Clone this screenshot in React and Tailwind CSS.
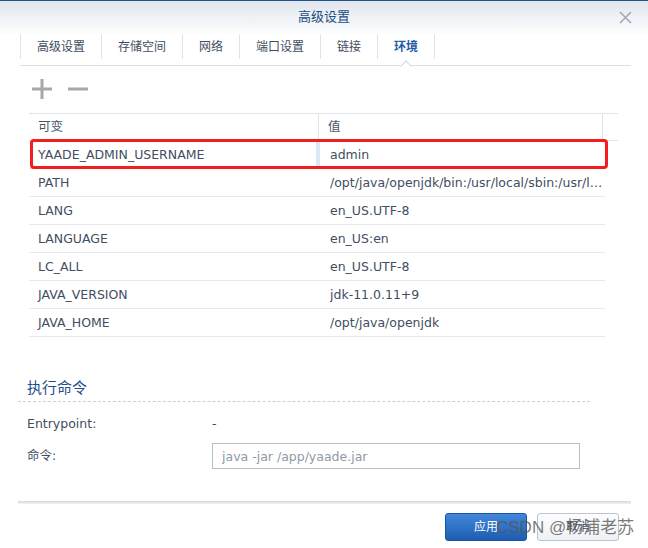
import React from "react";

const TABS = ["高级设置", "存储空间", "网络", "端口设置", "链接", "环境"];

const ROWS = [
  ["YAADE_ADMIN_USERNAME", "admin"],
  ["PATH", "/opt/java/openjdk/bin:/usr/local/sbin:/usr/local/bin:/usr/sbin:/usr/bin:/sbin:/bin"],
  ["LANG", "en_US.UTF-8"],
  ["LANGUAGE", "en_US:en"],
  ["LC_ALL", "en_US.UTF-8"],
  ["JAVA_VERSION", "jdk-11.0.11+9"],
  ["JAVA_HOME", "/opt/java/openjdk"],
];

const Tabs = ({ active = 5 }) => {
  return (
    <div className="ml-[20px] mr-[17px] h-[33px] border-b border-[#d9dee4] flex items-start text-[12px]">
      {TABS.map((t, i) => (
        <div
          key={t}
          className={`relative mt-[1px] h-[25px] px-[16px] flex items-center border-l border-[#dfe4ea] ${i === TABS.length - 1 ? "border-r" : ""} ${i === active ? "text-[#1f5ba6] font-bold" : "text-[#3e4d5e]"}`}
        >
          {t}
          {i === active && (
            <span className="absolute left-1/2 -ml-[4px] top-[28px] w-[8px] h-[8px] rotate-45 bg-white border-l border-t border-[#d3d9e0]" />
          )}
        </div>
      ))}
    </div>
  );
};

const Toolbar = () => {
  return (
    <div className="mt-[13px] pl-[32px] flex gap-[16px]">
      <svg width="20" height="20" viewBox="0 0 20 20">
        <rect x="0" y="8.5" width="20" height="3" fill="#a8a8a8" />
        <rect x="8.5" y="0" width="3" height="20" fill="#a8a8a8" />
      </svg>
      <svg width="20" height="20" viewBox="0 0 20 20">
        <rect x="0" y="8.5" width="20" height="3" fill="#a8a8a8" />
      </svg>
    </div>
  );
};

const EnvTable = () => {
  return (
    <div className="relative mt-[14px] ml-[29px] w-[589px]">
      <div className="h-[28px] flex border-t border-b border-[#dfe4ea] text-[#47576a]">
        <div className="w-[290px] pl-[9px] pt-[1px] flex items-center border-r border-[#dfe4ea]">可变</div>
        <div className="w-[284px] pl-[9px] pt-[1px] flex items-center border-r border-[#dfe4ea]">值</div>
        <div className="flex-1" />
      </div>
      {ROWS.map(([k, v], i) => (
        <div key={k} className="w-[576px] h-[28px] flex border-b border-[#e5e9ee]">
          <div className={`${i === 0 ? "w-[287px]" : "w-[291px]"} pl-[9px] pt-[2px] flex items-center`}>{k}</div>
          {i === 0 && <div className="w-[4px] bg-[#dce7f5]" />}
          <div className="w-[284px] pl-[10px] pt-[2px] flex items-center min-w-0">
            <span className="truncate">{v}</span>
          </div>
        </div>
      ))}
      <div className="absolute left-[1px] top-[26px] w-[578px] h-[30px] border-[3px] border-[#f41d1d] rounded-[4px] pointer-events-none" />
    </div>
  );
};

export default function App() {
  return (
    <div className="relative w-[648px] h-[548px] overflow-hidden bg-white border-t border-[#23528f] text-[12.5px] text-[#3f4e61] font-['DejaVu_Sans','Noto_Sans_CJK_SC',sans-serif]">
      <div className="relative h-[32px] flex items-center justify-center bg-gradient-to-b from-[#e1e7ee] to-[#fbfcfd]">
        <span className="text-[13px] text-[#1b4c87]">高级设置</span>
        <svg className="absolute right-[16px] top-[10px]" width="13" height="13" viewBox="0 0 13 13">
          <path d="M1 1 L12 12 M12 1 L1 12" stroke="#a2a9b1" strokeWidth="1.6" />
        </svg>
      </div>

      <Tabs />
      <Toolbar />
      <EnvTable />

      <div className="mt-[41px] ml-[18px] mr-[58px]">
        <div className="pl-[9px] pb-[3px] h-[24px] leading-[20px] text-[15px] text-[#1f4f8b] border-b border-dashed border-[#c8d0da]">
          执行命令
        </div>
        <div className="mt-[12px] h-[20px] flex items-center pl-[9px]">
          <div className="w-[185px]">Entrypoint:</div>
          <div>-</div>
        </div>
        <div className="mt-[9px] flex items-center pl-[9px]">
          <div className="w-[185px]">命令:</div>
          <input
            className="w-[368px] h-[26px] px-[9px] border border-[#b5c0cd] outline-none bg-white text-[12.5px] placeholder:text-[#8e9aa8]"
            placeholder="java -jar /app/yaade.jar"
          />
        </div>
      </div>

      <div className="mt-[32px] ml-[18px] mr-[17px] h-[3px] bg-gradient-to-b from-[#d8d8d8] to-[#f4f4f4]" />

      <div className="mt-[9px] mr-[29px] flex justify-end gap-[10px]">
        <button className="w-[82px] h-[28px] rounded-[3px] border border-[#1b55a2] bg-gradient-to-b from-[#4287da] to-[#1c5db2] text-white text-[12px]">
          应用
        </button>
        <button className="w-[82px] h-[28px] rounded-[3px] border border-[#bcc6d2] bg-gradient-to-b from-[#fdfdfe] to-[#eef1f5] text-[#3f4e61] text-[12px]">
          取消
        </button>
      </div>

      <div className="absolute left-[496px] top-[516px] leading-[22px] text-[17px] font-['Liberation_Sans','Noto_Sans_CJK_SC',sans-serif] text-[rgba(85,85,85,0.78)] whitespace-nowrap pointer-events-none">
        CSDN @杨浦老苏
      </div>
    </div>
  );
}
